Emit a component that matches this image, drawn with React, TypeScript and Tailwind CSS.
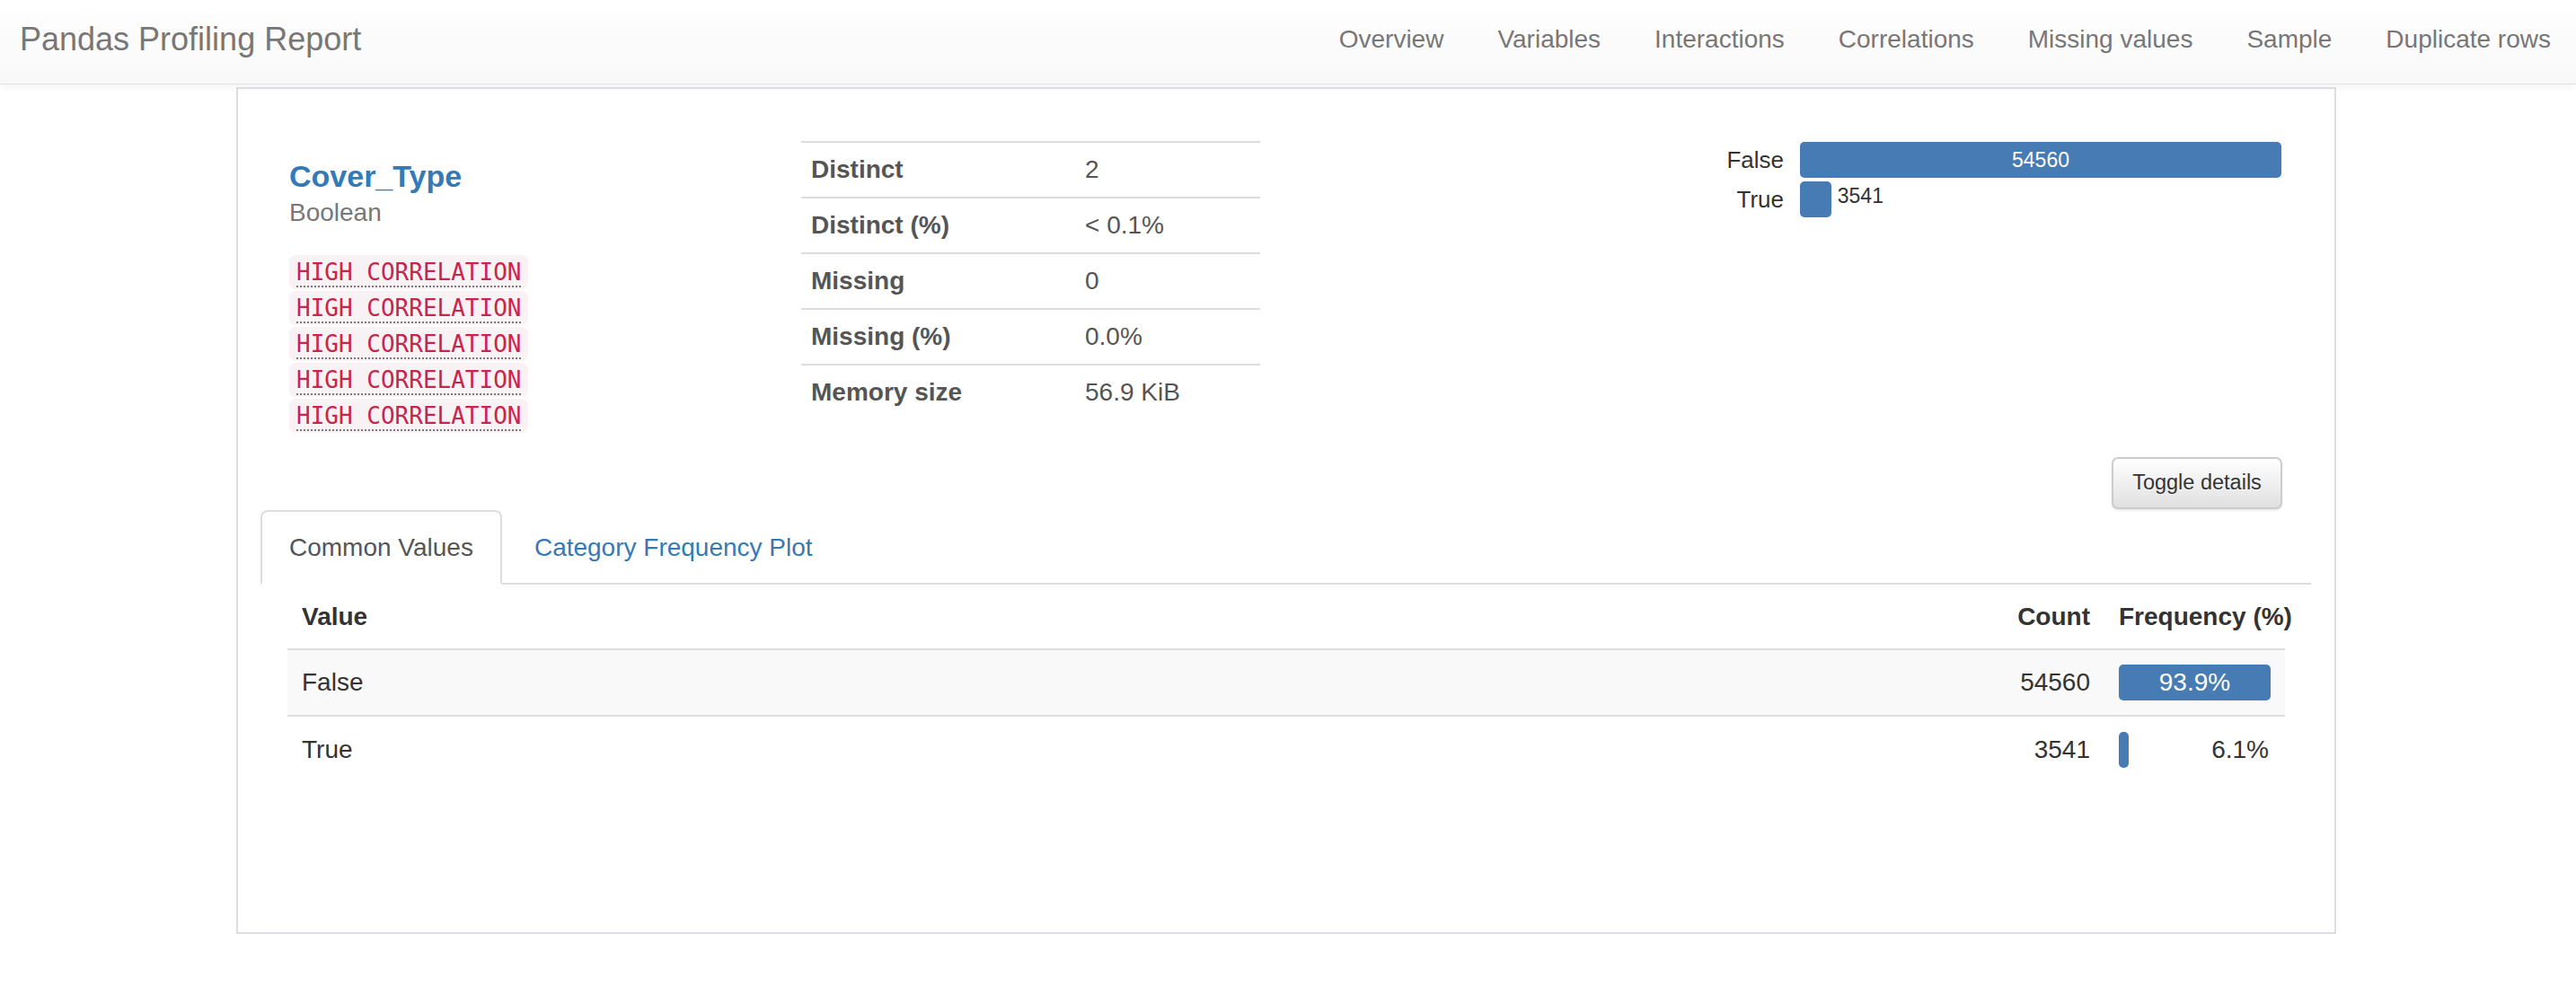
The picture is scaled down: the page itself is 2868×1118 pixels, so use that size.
import { ReactNode } from 'react';

const navItems = ['Overview', 'Variables', 'Interactions', 'Correlations', 'Missing values', 'Sample', 'Duplicate rows'];

const stats = [
  { label: 'Distinct', value: '2' },
  { label: 'Distinct (%)', value: '< 0.1%' },
  { label: 'Missing', value: '0' },
  { label: 'Missing (%)', value: '0.0%' },
  { label: 'Memory size', value: '56.9 KiB' },
];

const values = [
  { value: 'False', count: 54560, freq: 93.9 },
  { value: 'True', count: 3541, freq: 6.1 },
];

const maxCount = Math.max(...values.map((v) => v.count));

function Badge({ children }: { children: ReactNode }) {
  return (
    <div className="flex">
      <span className="h-[38px] px-[8px] mb-[2px] rounded-[7px] bg-[#f9f2f4] text-[#c7254e] font-['DejaVu_Sans_Mono',monospace] text-[26px] leading-[38px] underline decoration-dotted decoration-[#777] decoration-[2px] underline-offset-[6px]">
        {children}
      </span>
    </div>
  );
}

function Navbar() {
  return (
    <nav className="h-[94px] flex items-center justify-between pb-[6px] bg-gradient-to-b from-white to-[#f8f8f8] border-b border-[#e4e4e4] shadow-[0_2px_8px_rgba(0,0,0,0.06)]">
      <span className="pl-[22px] text-[36px] text-[#777]">Pandas Profiling Report</span>
      <ul className="flex">
        {navItems.map((item) => (
          <li key={item} className="px-[30px] last:pr-[28px] text-[28px] text-[#777]">
            {item}
          </li>
        ))}
      </ul>
    </nav>
  );
}

function StatsTable() {
  return (
    <div className="w-[511px] text-[28px] text-[#555]">
      {stats.map((s) => (
        <div key={s.label} className="h-[62px] flex items-center border-t-2 border-[#ddd]">
          <div className="w-[305px] pl-[11px] font-bold">{s.label}</div>
          <div className="pl-[11px]">{s.value}</div>
        </div>
      ))}
    </div>
  );
}

function MiniChart() {
  return (
    <div className="grid grid-cols-[80px_536px] gap-x-[18px] gap-y-[4px] text-[#333]">
      {values.map((v) => {
        const w = (v.count / maxCount) * 536;
        const wide = v.count === maxCount;
        return (
          <div key={v.value} className="contents">
            <div className="h-[40px] flex items-center justify-end text-[26px]">{v.value}</div>
            <div className="h-[40px] flex items-center">
              <div
                className="h-[40px] rounded-[5px] bg-[#477bb3] flex items-center justify-center text-white text-[23px]"
                style={{ width: w }}
              >
                {wide ? v.count : ''}
              </div>
              {!wide && <span className="ml-[7px] -mt-[8px] text-[23px]">{v.count}</span>}
            </div>
          </div>
        );
      })}
    </div>
  );
}

function ValuesTable() {
  return (
    <div className="ml-[30px] w-[2224px] text-[28px] text-[#333]">
      <div className="h-[73px] flex items-center border-b-2 border-[#ddd] font-bold">
        <div className="flex-1 pl-[16px]">Value</div>
        <div className="pr-[16px] text-right">Count</div>
        <div className="w-[201px] pl-[16px] whitespace-nowrap">Frequency (%)</div>
      </div>
      {values.map((v, i) => {
        const pct = (v.count / maxCount) * 100;
        const wide = v.count === maxCount;
        return (
          <div
            key={v.value}
            className={i === 0 ? 'h-[74px] flex items-center bg-[#f9f9f9] border-b-2 border-[#ddd]' : 'h-[74px] flex items-center'}
          >
            <div className="flex-1 pl-[16px]">{v.value}</div>
            <div className="pr-[16px] text-right">{v.count}</div>
            <div className="w-[201px] px-[16px]">
              {wide ? (
                <div
                  className="h-[40px] rounded-[5px] bg-[#477bb3] flex items-center justify-center text-white"
                  style={{ width: `${pct}%` }}
                >
                  {v.freq.toFixed(1)}%
                </div>
              ) : (
                <div className="flex items-center justify-between">
                  <div className="h-[40px] rounded-[5px] bg-[#477bb3]" style={{ width: `${pct}%` }} />
                  <span className="pr-[2px]">{v.freq.toFixed(1)}%</span>
                </div>
              )}
            </div>
          </div>
        );
      })}
    </div>
  );
}

export default function App() {
  return (
    <div className="min-h-[1118px] bg-white font-['Liberation_Sans',Arial,sans-serif]">
      <Navbar />

      <div className="ml-[263px] mt-[3px] w-[2338px] border-2 border-[#dddde3] pl-[25px] pr-[26px] pb-[166px]">
        {/* Top — name, stats, mini chart */}
        <div className="flex pt-[58px]">
          <div className="w-[602px] pl-[32px] pt-[20px]">
            <div className="text-[34px] leading-[38px] font-bold text-[#337ab7]">Cover_Type</div>
            <div className="mt-[4px] text-[28px] leading-[36px] text-[#777]">Boolean</div>
            <div className="mt-[29px]">
              {[0, 1, 2, 3, 4].map((n) => (
                <Badge key={n}>HIGH CORRELATION</Badge>
              ))}
            </div>
          </div>

          <StatsTable />

          <div className="flex-1 flex justify-end pr-[33px] pt-[1px]">
            <div>
              <MiniChart />
            </div>
          </div>
        </div>

        {/* Toggle */}
        <div className="flex justify-end pr-[32px] mt-[25px]">
          <button className="w-[190px] h-[58px] rounded-[7px] border-2 border-[#ccc] bg-gradient-to-b from-white to-[#e0e0e0] text-[23.5px] text-[#333] [text-shadow:0_1px_0_#fff] shadow-[0_2px_2px_rgba(0,0,0,0.075)]">
            Toggle details
          </button>
        </div>

        {/* Tabs */}
        <ul className="mt-[1px] flex border-b-2 border-[#ddd] text-[28px]">
          <li className="h-[83px] -mb-[2px] px-[30px] flex items-center rounded-t-[8px] border-2 border-[#ddd] border-b-transparent bg-white text-[#555]">
            Common Values
          </li>
          <li className="h-[83px] -mb-[2px] ml-[4px] px-[30px] flex items-center border-2 border-transparent text-[#337ab7]">
            Category Frequency Plot
          </li>
        </ul>

        <ValuesTable />
      </div>
    </div>
  );
}
